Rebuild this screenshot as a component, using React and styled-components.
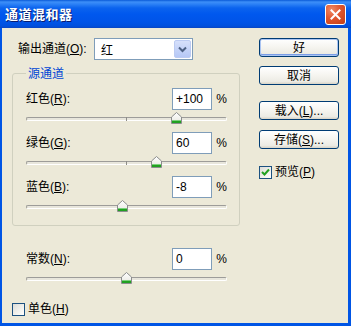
import React from 'react';
import styled, { createGlobalStyle } from 'styled-components';

const Global = createGlobalStyle`
  html, body { margin: 0; padding: 0; background: #ffffff; }
  body {
    font-family: "Liberation Sans", "Noto Sans CJK SC", sans-serif;
    font-size: 12px;
    color: #000;
  }
  * { box-sizing: border-box; }
`;

const Window = styled.div`
  width: 351px;
  height: 326px;
  display: flex;
  flex-direction: column;
  background: #0055e5;
`;

const TitleBar = styled.div`
  height: 28px;
  flex: none;
  display: flex;
  align-items: center;
  justify-content: space-between;
  padding: 0 5px 0 5px;
  background: linear-gradient(
    to bottom,
    #0a5ad8 0px,
    #3d8ff8 2px,
    #2d82f6 4px,
    #0b63ee 8px,
    #0058ee 14px,
    #0054e8 22px,
    #0050de 26px,
    #0a45c2 28px
  );
`;

const Title = styled.div`
  color: #ffffff;
  font-family: "Noto Sans CJK SC", sans-serif;
  font-weight: 700;
  font-size: 13px;
  letter-spacing: 0.5px;
  line-height: 16px;
  text-shadow: 1px 1px 0 #0a1c6e;
`;

const CloseButton = styled.div`
  width: 21px;
  height: 21px;
  margin-top: 1px;
  border: 1px solid #ffffff;
  border-radius: 3px;
  background: radial-gradient(circle at 30% 25%, #f08a66 0%, #e0562f 45%, #c23d15 100%);
  display: flex;
  align-items: center;
  justify-content: center;
`;

const Body = styled.div`
  flex: 1;
  margin: 0 3px 3px 2px;
  background: #ece9d8;
  display: flex;
  padding: 10px 0 0 10px;
`;

const LeftColumn = styled.div`
  width: 228px;
  display: flex;
  flex-direction: column;
`;

const RightColumn = styled.div`
  width: 80px;
  margin-left: 19px;
  display: flex;
  flex-direction: column;
`;

const OutputRow = styled.div`
  height: 22px;
  display: flex;
  align-items: center;
  padding-left: 6px;
`;

const OutputLabel = styled.span`
  width: 76px;
  line-height: 14px;
`;

const Select = styled.div`
  width: 99px;
  height: 22px;
  border: 1px solid #7f9db9;
  background: #ffffff;
  display: flex;
  align-items: center;
  justify-content: space-between;
  padding: 1px 1px 1px 6px;
  font-family: "Noto Sans CJK SC", sans-serif;
`;

const DropButton = styled.div`
  width: 17px;
  height: 18px;
  border-radius: 2px;
  border: 1px solid #bccbf2;
  background: linear-gradient(to bottom, #d6e0fb, #c2d1f8 60%, #b6c8f6);
  display: flex;
  align-items: center;
  justify-content: center;
`;

const Group = styled.fieldset`
  margin: 6px 0 0 0;
  padding: 8px 12px 13px 13px;
  border: 1px solid #d0d0bf;
  border-radius: 3px;
  min-width: 0;
`;

const Legend = styled.legend`
  padding: 0 2px;
  color: #0046d5;
  line-height: 14px;
  font-family: "Noto Sans CJK SC", sans-serif;
`;

const ChannelBlock = styled.div`
  display: flex;
  flex-direction: column;
  margin-bottom: ${p => (p.$last ? '0' : '8px')};
  padding-left: ${p => (p.$outside ? '14px' : '0')};
  width: ${p => (p.$outside ? '215px' : 'auto')};
`;

const InputLine = styled.div`
  height: 22px;
  display: grid;
  grid-template-columns: 1fr 40px 15px;
  align-items: center;
`;

const FieldLabel = styled.span`
  line-height: 14px;
`;

const NumberBox = styled.div`
  height: 22px;
  border: 1px solid #7f9db9;
  background: #ffffff;
  padding: 0 3px;
  display: flex;
  align-items: center;
  font-size: 12px;
`;

const Percent = styled.span`
  text-align: right;
`;

const SliderWrap = styled.div`
  position: relative;
  width: 201px;
  height: 12px;
  margin-top: 2px;
`;

const Track = styled.div`
  position: absolute;
  left: 0;
  right: 0;
  top: 5px;
  height: 4px;
  border-radius: 2px;
  border-top: 1px solid #9d9c99;
  border-left: 1px solid #9d9c99;
  border-bottom: 1px solid #ffffff;
  border-right: 1px solid #ffffff;
  background: #e8e6dc;
`;

const Tick = styled.div`
  position: absolute;
  left: 100px;
  top: 5px;
  width: 1px;
  height: 4px;
  background: #8e8d88;
`;

const ThumbSvg = styled.svg`
  position: absolute;
  top: 0;
  display: block;
`;

const Button = styled.div`
  width: 80px;
  height: 19px;
  margin-top: ${p => p.$gap}px;
  border: 1px solid #003c74;
  border-radius: 3px;
  background: linear-gradient(to bottom, #ffffff 0%, #f5f4ef 50%, #ecebe4 85%, #d8d3c6 100%);
  display: flex;
  align-items: center;
  justify-content: center;
  line-height: 14px;
  box-shadow: ${p => (p.$default ? 'inset 0 0 0 1px #aac4f2, inset 0 -1px 0 1px #7a9de6' : 'none')};
`;

const CheckRow = styled.label`
  display: flex;
  align-items: center;
  margin-top: ${p => p.$gap}px;
  margin-left: ${p => p.$indent || 0}px;
  line-height: 14px;
`;

const CheckBox = styled.span`
  width: 13px;
  height: 13px;
  border: 1px solid #1c5180;
  background: linear-gradient(135deg, #dcdcd7 0%, #f2f2ee 60%, #ffffff 100%);
  display: flex;
  align-items: center;
  justify-content: center;
  margin-right: 3px;
`;

function Thumb({ value }) {
  const center = ((value + 200) / 400) * 200;
  return (
    <ThumbSvg width="11" height="12" viewBox="0 0 11 12" style={{ left: `${center - 5}px` }}>
      <defs>
        <linearGradient id="tg" x1="0" y1="0" x2="0" y2="1">
          <stop offset="0" stopColor="#ffffff" />
          <stop offset="1" stopColor="#e6e6df" />
        </linearGradient>
      </defs>
      <path d="M0.5 11.5 V5 L5.5 0.5 L10.5 5 V11.5 Z" fill="url(#tg)" stroke="#8b8c8c" />
      <rect x="1" y="9" width="9" height="2" fill="#21a121" />
      <rect x="1" y="8" width="9" height="1" fill="#7bd07b" />
    </ThumbSvg>
  );
}

function Slider({ value }) {
  return (
    <SliderWrap>
      <Track />
      <Tick />
      <Thumb value={value} />
    </SliderWrap>
  );
}

function Channel({ label, mnemonic, value, num, last, outside }) {
  return (
    <ChannelBlock $last={last} $outside={outside}>
      <InputLine>
        <FieldLabel>
          {label}(<u>{mnemonic}</u>):
        </FieldLabel>
        <NumberBox>{value}</NumberBox>
        <Percent>%</Percent>
      </InputLine>
      <Slider value={num} />
    </ChannelBlock>
  );
}

function Check({ checked }) {
  return (
    <CheckBox>
      {checked && (
        <svg width="9" height="9" viewBox="0 0 9 9">
          <path d="M1 4 L3.5 6.5 L8 1.5" fill="none" stroke="#21a121" strokeWidth="2" />
        </svg>
      )}
    </CheckBox>
  );
}

export default function App() {
  return (
    <>
      <Global />
      <Window>
        <TitleBar>
          <Title>通道混和器</Title>
          <CloseButton>
            <svg width="11" height="11" viewBox="0 0 11 11">
              <path d="M1.5 1.5 L9.5 9.5 M9.5 1.5 L1.5 9.5" stroke="#ffffff" strokeWidth="2" strokeLinecap="square" />
            </svg>
          </CloseButton>
        </TitleBar>
        <Body>
          <LeftColumn>
            <OutputRow>
              <OutputLabel>
                输出通道(<u>O</u>):
              </OutputLabel>
              <Select>
                <span>红</span>
                <DropButton>
                  <svg width="9" height="7" viewBox="0 0 9 7">
                    <path d="M1 1.5 L4.5 5 L8 1.5" fill="none" stroke="#4d6185" strokeWidth="2" />
                  </svg>
                </DropButton>
              </Select>
            </OutputRow>
            <Group>
              <Legend>源通道</Legend>
              <Channel label="红色" mnemonic="R" value="+100" num={100} />
              <Channel label="绿色" mnemonic="G" value="60" num={60} />
              <Channel label="蓝色" mnemonic="B" value="-8" num={-8} last />
            </Group>
            <div style={{ height: 22 }} />
            <Channel label="常数" mnemonic="N" value="0" num={0} last outside />
            <CheckRow $gap={18}>
              <Check />
              单色(<u>H</u>)
            </CheckRow>
          </LeftColumn>
          <RightColumn>
            <Button $gap={0} $default>好</Button>
            <Button $gap={9}>取消</Button>
            <Button $gap={16}>载入(<u>L</u>)...</Button>
            <Button $gap={10}>存储(<u>S</u>)...</Button>
            <CheckRow $gap={16}>
              <Check checked />
              预览(<u>P</u>)
            </CheckRow>
          </RightColumn>
        </Body>
      </Window>
    </>
  );
}
